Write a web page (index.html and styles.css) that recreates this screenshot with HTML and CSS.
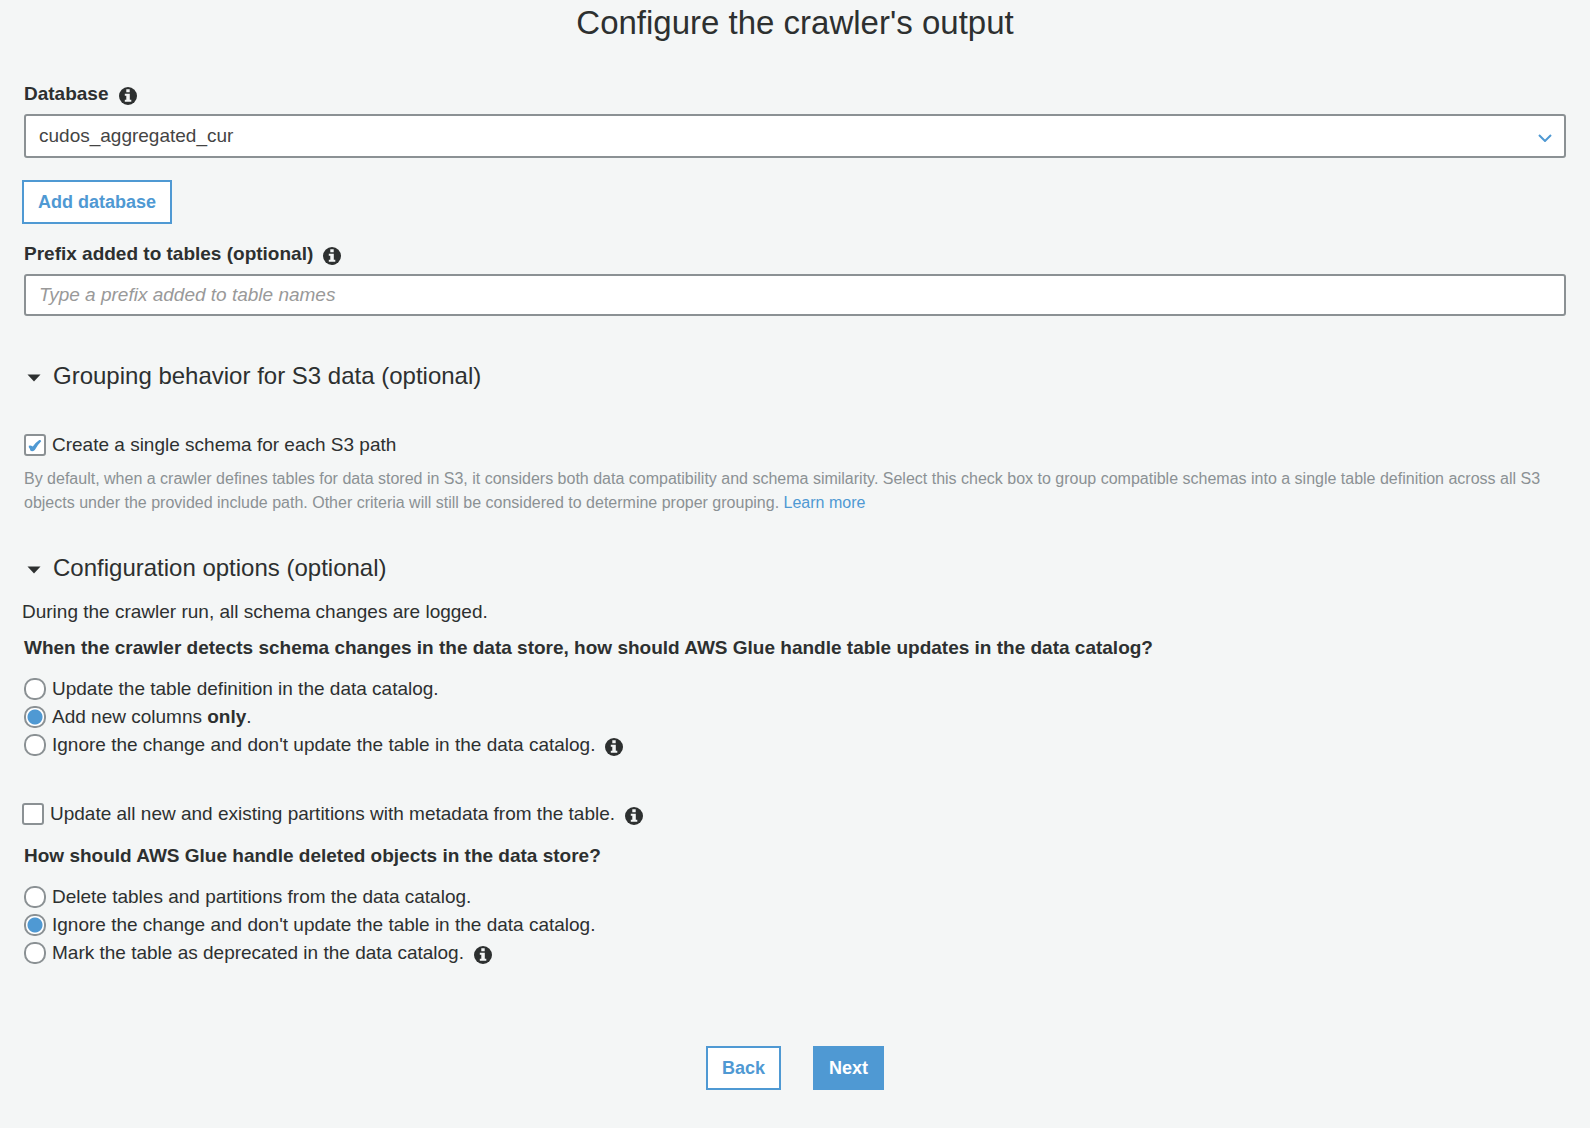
FILE: index.html
```html
<!DOCTYPE html>
<html lang="en">
<head>
<meta charset="utf-8">
<title>Configure the crawler's output</title>
<meta name="viewport" content="width=device-width, initial-scale=1">
<link rel="stylesheet" href="styles.css">
</head>
<body>
<svg class="defs" aria-hidden="true">
  <symbol id="info" viewBox="0 0 18 18">
    <circle cx="9" cy="9" r="9" fill="#2d3030"/>
    <path d="M7.300 2.300h3.400v3H7.300zM5.800 6.700h5v6h1.500v2.100H5.800v-2.100h1.500V8.800H5.800z" fill="#f4f6f6"/>
  </symbol>
</svg>
<main class="page">
  <h1 class="title">Configure the crawler's output</h1>
  <form class="form">
    <div class="label-row">
      <label for="database">Database</label>
      <svg class="info"><use href="#info"/></svg>
    </div>
    <div class="select-wrap">
      <select id="database" class="control select"><option>cudos_aggregated_cur</option></select>
      <svg class="chevron" viewBox="0 0 14 8"><path d="M1 1l6 6 6-6" fill="none" stroke="#4f99d3" stroke-width="2"/></svg>
    </div>
    <button type="button" class="button add">Add database</button>

    <div class="label-row">
      <label for="prefix">Prefix added to tables (optional)</label>
      <svg class="info"><use href="#info"/></svg>
    </div>
    <input id="prefix" class="control text" type="text" placeholder="Type a prefix added to table names">

    <details class="section grouping" open>
      <summary class="summary">
        <svg class="caret" viewBox="0 0 14 8"><path d="M.5.5h13L7 7.500z" fill="#2d3030"/></svg>
        <h2 class="heading">Grouping behavior for S3 data (optional)</h2>
      </summary>
      <div class="choice schema">
        <span class="tick"><input id="schema" class="box" type="checkbox" checked><svg class="mark" viewBox="0 0 14 13"><path d="M.8 6.800Q2.500 5.800 4.800 7.600Q7.500 3.500 11.300 1Q12.800.6 13.200 2.300Q9.500 6 6.800 11Q4.500 13 2.500 11.800Q2 9.500.8 8.200z" fill="#4f99d3"/></svg></span>
        <label for="schema">Create a single schema for each S3 path</label>
      </div>
      <p class="hint">By default, when a crawler defines tables for data stored in S3, it considers both data compatibility and schema similarity. Select this check box to group compatible schemas into a single table definition across all S3 objects under the provided include path. Other criteria will still be considered to determine proper grouping. <a class="link" href="#">Learn more</a></p>
    </details>

    <details class="section config" open>
      <summary class="summary">
        <svg class="caret" viewBox="0 0 14 8"><path d="M.5.5h13L7 7.500z" fill="#2d3030"/></svg>
        <h2 class="heading">Configuration options (optional)</h2>
      </summary>
      <p class="note">During the crawler run, all schema changes are logged.</p>
      <fieldset class="group">
        <legend class="question">When the crawler detects schema changes in the data store, how should AWS Glue handle table updates in the data catalog?</legend>
        <div class="choice"><input id="u1" class="radio" type="radio" name="updates"><label for="u1">Update the table definition in the data catalog.</label></div>
        <div class="choice"><input id="u2" class="radio" type="radio" name="updates" checked><label for="u2">Add new columns <b>only</b>.</label></div>
        <div class="choice"><input id="u3" class="radio" type="radio" name="updates"><label for="u3">Ignore the change and don't update the table in the data catalog.</label><svg class="info"><use href="#info"/></svg></div>
      </fieldset>
      <div class="choice partitions"><input id="partitions" class="box" type="checkbox"><label for="partitions">Update all new and existing partitions with metadata from the table.</label><svg class="info"><use href="#info"/></svg></div>
      <fieldset class="group">
        <legend class="question">How should AWS Glue handle deleted objects in the data store?</legend>
        <div class="choice"><input id="d1" class="radio" type="radio" name="deleted"><label for="d1">Delete tables and partitions from the data catalog.</label></div>
        <div class="choice"><input id="d2" class="radio" type="radio" name="deleted" checked><label for="d2">Ignore the change and don't update the table in the data catalog.</label></div>
        <div class="choice"><input id="d3" class="radio" type="radio" name="deleted"><label for="d3">Mark the table as deprecated in the data catalog.</label><svg class="info"><use href="#info"/></svg></div>
      </fieldset>
    </details>

    <div class="actions">
      <button type="button" class="button">Back</button>
      <button type="submit" class="button primary">Next</button>
    </div>
  </form>
</main>
</body>
</html>
```
FILE: styles.css
```css
* { box-sizing: border-box; }
body {
  margin: 0;
  background: #f4f6f6;
  color: #2d3030;
  font: 19px/28px "Liberation Sans", Arial, sans-serif;
}
h1, h2, p { margin: 0; font-weight: 400; }
.defs { position: absolute; width: 0; height: 0; }
.page { padding: 0 24px 38px; }
.title { margin-bottom: 34px; font-size: 33px; line-height: 46px; text-align: center; }

.label-row { display: flex; align-items: center; margin-bottom: 6px; font-weight: 700; }
.info { width: 18px; height: 18px; margin: 3px 0 0 10px; flex: none; }
.control {
  display: block;
  width: 100%;
  padding: 0 13px;
  border: 2px solid #8b9194;
  border-radius: 3px;
  background: #fff;
  color: #444;
  font: inherit;
}
.select-wrap { position: relative; margin-bottom: 22px; }
.select { height: 44px; appearance: none; }
.chevron { position: absolute; right: 14px; top: 20px; width: 14px; height: 8px; pointer-events: none; }
.text { height: 42px; }
.text::placeholder { color: #999; font-style: italic; opacity: 1; }

.button {
  height: 44px;
  padding: 0 14px;
  border: 2px solid #4f99d3;
  background: #fff;
  color: #4f99d3;
  font: inherit;
  font-size: 18px;
  font-weight: 700;
}
.add { display: block; margin: 0 0 16px -2px; }
.primary { background: #4f99d3; color: #fff; }
.actions { display: flex; justify-content: center; gap: 32px; margin-top: 79px; }

.grouping { margin-top: 44px; }
.config { margin-top: 37px; }
.summary { display: flex; align-items: center; list-style: none; }
.caret { width: 14px; height: 8px; margin: 4px 12px 0 3px; flex: none; }
.heading { font-size: 24px; line-height: 32px; }
.schema { margin: 39px 0 8px; }
.hint { color: #8b9194; font-size: 16px; line-height: 24px; }
.link { color: #4f99d3; text-decoration: none; }
.note { margin: 14px 0 8px -2px; }

.group { margin: 0; padding: 0; border: 0; }
.question { margin-bottom: 13px; padding: 0; font-weight: 700; }
.choice { display: flex; align-items: center; gap: 6px; }
.choice .info { margin: 3px 0 0 4px; }
.partitions { margin: 41px 0 14px -2px; }
.box, .radio {
  width: 22px;
  height: 22px;
  margin: 0;
  flex: none;
  appearance: none;
  border: 2px solid #8b9194;
  background: #fff;
}
.box { border-radius: 3px; }
.radio { border-radius: 10px; }
.radio:checked { background: radial-gradient(circle, #4f99d3 7px, #fff 8px); }
.tick { display: flex; position: relative; }
.mark { position: absolute; left: 4px; top: 5px; width: 14px; height: 13px; pointer-events: none; }
.box:not(:checked) + .mark { display: none; }
```
